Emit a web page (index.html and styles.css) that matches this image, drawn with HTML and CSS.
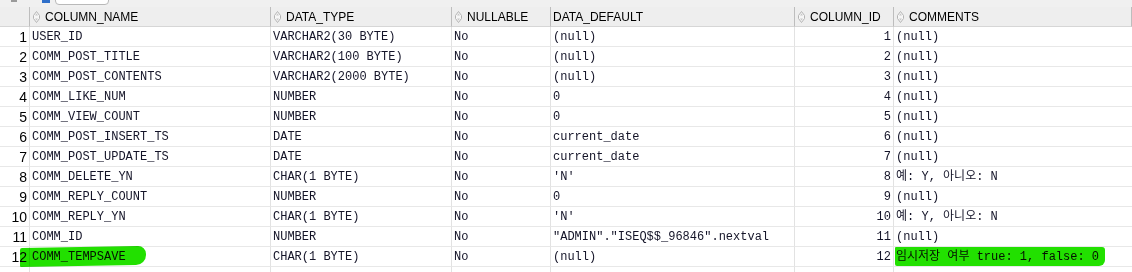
FILE: index.html
```html
<!DOCTYPE html>
<html lang="en">
  <head>
    <meta charset="UTF-8" />
    <title>Columns</title>
    <link rel="stylesheet" href="styles.css">
  </head>
  <body>
    <!-- Toolbar (cut off at top) -->
    <div class="toolbar">
      <span class="tool tool-grey"></span>
      <span class="tool tool-blue"></span>
      <span class="tool-search"></span>
    </div>

    <!-- Column grid -->
    <div class="grid">
      <div class="hcell"></div>
      <div class="hcell"><i class="sort"></i>COLUMN_NAME</div>
      <div class="hcell"><i class="sort"></i>DATA_TYPE</div>
      <div class="hcell"><i class="sort"></i>NULLABLE</div>
      <div class="hcell plain">DATA_DEFAULT</div>
      <div class="hcell"><i class="sort"></i>COLUMN_ID</div>
      <div class="hcell"><i class="sort"></i>COMMENTS</div>

      <div class="num">1</div><div class="cell">USER_ID</div><div class="cell">VARCHAR2(30 BYTE)</div><div class="cell">No</div><div class="cell">(null)</div><div class="cell right">1</div><div class="cell">(null)</div>
      <div class="num">2</div><div class="cell">COMM_POST_TITLE</div><div class="cell">VARCHAR2(100 BYTE)</div><div class="cell">No</div><div class="cell">(null)</div><div class="cell right">2</div><div class="cell">(null)</div>
      <div class="num">3</div><div class="cell">COMM_POST_CONTENTS</div><div class="cell">VARCHAR2(2000 BYTE)</div><div class="cell">No</div><div class="cell">(null)</div><div class="cell right">3</div><div class="cell">(null)</div>
      <div class="num">4</div><div class="cell">COMM_LIKE_NUM</div><div class="cell">NUMBER</div><div class="cell">No</div><div class="cell">0</div><div class="cell right">4</div><div class="cell">(null)</div>
      <div class="num">5</div><div class="cell">COMM_VIEW_COUNT</div><div class="cell">NUMBER</div><div class="cell">No</div><div class="cell">0</div><div class="cell right">5</div><div class="cell">(null)</div>
      <div class="num">6</div><div class="cell">COMM_POST_INSERT_TS</div><div class="cell">DATE</div><div class="cell">No</div><div class="cell">current_date</div><div class="cell right">6</div><div class="cell">(null)</div>
      <div class="num">7</div><div class="cell">COMM_POST_UPDATE_TS</div><div class="cell">DATE</div><div class="cell">No</div><div class="cell">current_date</div><div class="cell right">7</div><div class="cell">(null)</div>
      <div class="num">8</div><div class="cell">COMM_DELETE_YN</div><div class="cell">CHAR(1 BYTE)</div><div class="cell">No</div><div class="cell">'N'</div><div class="cell right">8</div><div class="cell">예: Y, 아니오: N</div>
      <div class="num">9</div><div class="cell">COMM_REPLY_COUNT</div><div class="cell">NUMBER</div><div class="cell">No</div><div class="cell">0</div><div class="cell right">9</div><div class="cell">(null)</div>
      <div class="num">10</div><div class="cell">COMM_REPLY_YN</div><div class="cell">CHAR(1 BYTE)</div><div class="cell">No</div><div class="cell">'N'</div><div class="cell right">10</div><div class="cell">예: Y, 아니오: N</div>
      <div class="num">11</div><div class="cell">COMM_ID</div><div class="cell">NUMBER</div><div class="cell">No</div><div class="cell">"ADMIN"."ISEQ$$_96846".nextval</div><div class="cell right">11</div><div class="cell">(null)</div>
      <div class="num">12</div><div class="cell marked"><span class="mark mark-name"></span>COMM_TEMPSAVE</div><div class="cell">CHAR(1 BYTE)</div><div class="cell">No</div><div class="cell">(null)</div><div class="cell right">12</div><div class="cell marked"><span class="mark mark-comment"></span>임시저장 여부 true: 1, false: 0</div>

      <div class="fill"></div><div class="fill"></div><div class="fill"></div><div class="fill"></div><div class="fill"></div><div class="fill"></div><div class="fill"></div>
    </div>
  </body>
</html>
```

FILE: styles.css
```css
/* General */
body {
  margin: 0;
  background: #fff;
  font-family: "Liberation Sans", Arial, sans-serif;
  color: #000;
  overflow: hidden;
}

/* Toolbar strip */
.toolbar {
  height: 7px;
  background: #f0f0f0;
  display: flex;
  align-items: flex-start;
  overflow: hidden;
  padding-left: 11px;
}

.tool {
  display: block;
  height: 2px;
}

.tool-grey {
  width: 6px;
  background: #9a9a9a;
}

.tool-blue {
  width: 8px;
  height: 3px;
  margin-left: 25px;
  background: #2f6fc9;
}

.tool-search {
  display: block;
  width: 52px;
  height: 5px;
  margin-left: 5px;
  margin-top: -2px;
  background: #fff;
  border: 1px solid #b9b9b9;
  border-radius: 0 0 4px 4px;
}

/* Grid */
.grid {
  display: grid;
  grid-template-columns: 30px 241px 181px 99px 244px 99px 1fr;
  grid-template-rows: repeat(13, 20px) 5px;
}

.hcell {
  box-sizing: border-box;
  display: flex;
  align-items: center;
  background: #eeeeee;
  border-right: 1px solid #bdbdbd;
  border-bottom: 1px solid #d6d6d6;
  font-size: 12px;
  padding-left: 3px;
  white-space: nowrap;
}

.hcell:last-child {
  border-right: none;
}

.hcell.plain {
  padding-left: 2px;
}

.sort {
  display: block;
  width: 7px;
  height: 12px;
  margin-right: 5px;
  background: url("data:image/svg+xml;utf8,<svg xmlns='http://www.w3.org/2000/svg' width='7' height='12' viewBox='0 0 7 12'><path d='M3.5 0.5 L6.5 4.5 L6.5 7.5 L3.5 11.5 L0.5 7.5 L0.5 4.5 Z' fill='%23f6f6f6' stroke='%23b4b4b4'/><path d='M3.5 2.5 L5 4.5 L2 4.5 Z M3.5 9.5 L5 7.5 L2 7.5 Z' fill='%23c8c8c8'/></svg>") no-repeat;
}

.num {
  box-sizing: border-box;
  border-right: 1px solid #e2e2e2;
  border-bottom: 1px solid #e8e8e8;
  font-size: 14px;
  line-height: 19px;
  padding-top: 1px;
  text-align: right;
  padding-right: 2px;
}

.cell {
  box-sizing: border-box;
  border-right: 1px solid #e2e2e2;
  border-bottom: 1px solid #e8e8e8;
  font-family: "Liberation Mono", "Courier New", "Noto Sans CJK KR", monospace;
  font-size: 12px;
  line-height: 19px;
  padding-top: 1px;
  padding-left: 2px;
  white-space: nowrap;
  overflow: hidden;
  color: #141428;
}

.cell.right {
  text-align: right;
  padding-right: 2px;
}

.grid > .cell:nth-child(7n) {
  border-right: none;
}

.fill {
  border-right: 1px solid #e2e2e2;
}

.fill:last-child {
  border-right: none;
}

/* Green marker highlights */
.marked {
  position: relative;
  overflow: visible;
}

.mark {
  position: absolute;
  top: 0;
  height: 19px;
  background: #22e000;
  mix-blend-mode: multiply;
}

.mark-name {
  left: -10px;
  width: 126px;
  border-radius: 2px 8px 10px 1px;
  transform: skewY(-1deg);
}

.mark-comment {
  left: 1px;
  width: 210px;
  border-radius: 1px 3px 6px 2px;
}
```
